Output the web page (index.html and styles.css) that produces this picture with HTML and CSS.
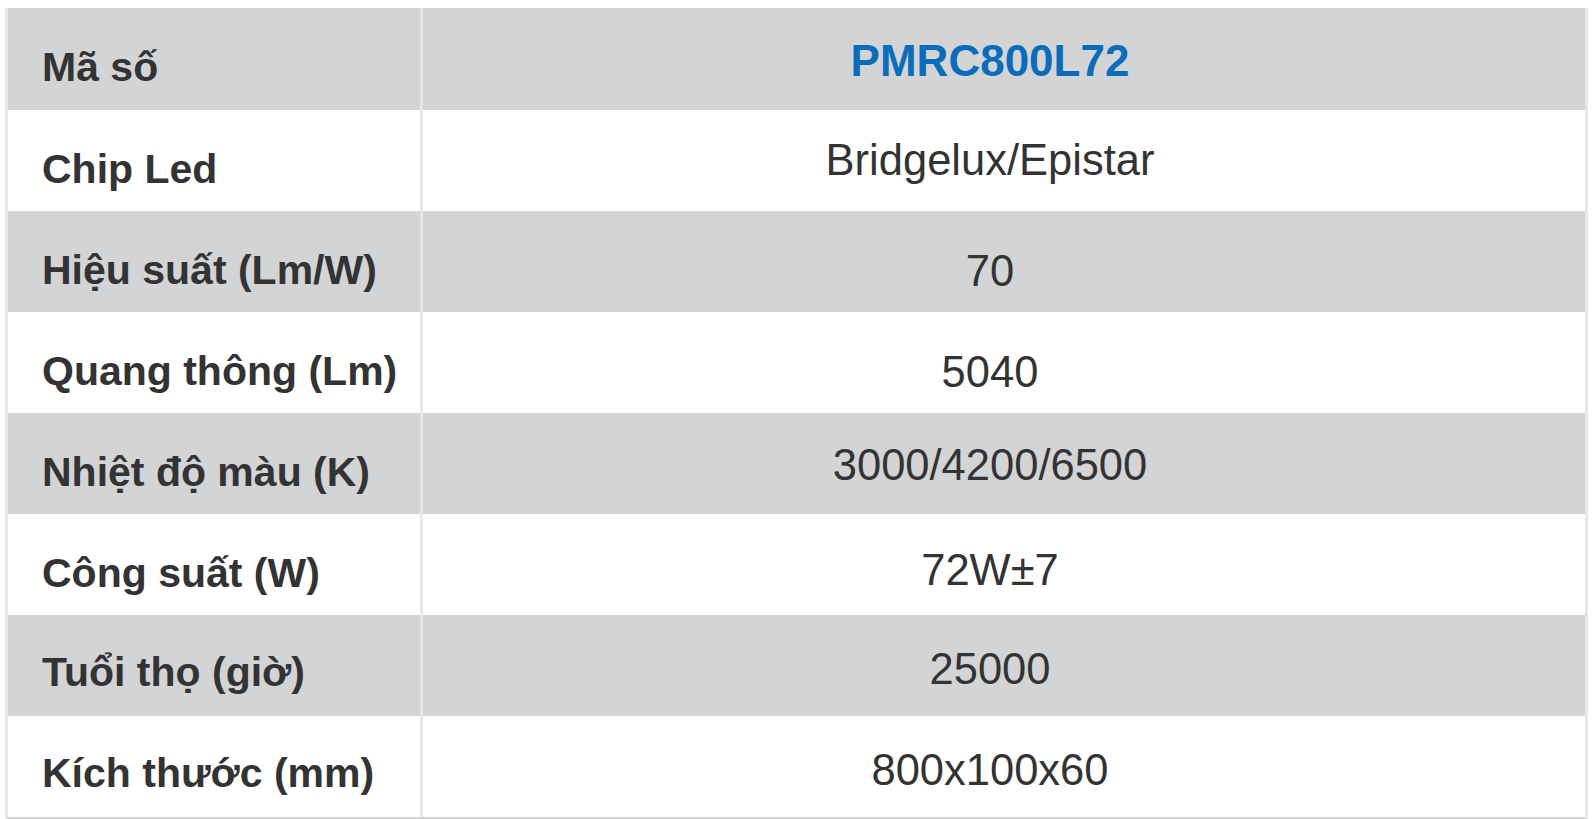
FILE: index.html
```html
<!DOCTYPE html>
<html lang="vi">
<head>
<meta charset="utf-8">
<title>PMRC800L72</title>
<link rel="stylesheet" href="styles.css">
</head>
<body>
<div class="spec">
  <div class="row gray head"><div class="label">Mã số</div><div class="value code">PMRC800L72</div></div>
  <div class="row"><div class="label">Chip Led</div><div class="value up">Bridgelux/Epistar</div></div>
  <div class="row gray"><div class="label">Hiệu suất (Lm/W)</div><div class="value drop">70</div></div>
  <div class="row"><div class="label">Quang thông (Lm)</div><div class="value drop">5040</div></div>
  <div class="row gray"><div class="label">Nhiệt độ màu (K)</div><div class="value">3000/4200/6500</div></div>
  <div class="row"><div class="label">Công suất (W)</div><div class="value mid">72W±7</div></div>
  <div class="row gray"><div class="label late">Tuổi thọ (giờ)</div><div class="value low">25000</div></div>
  <div class="row"><div class="label late">Kích thước (mm)</div><div class="value low">800x100x60</div></div>
</div>
</body>
</html>
```
FILE: styles.css
```css
html, body {
  margin: 0;
  padding: 0;
  background: #ffffff;
}
body {
  font-family: "Liberation Sans", Arial, sans-serif;
  color: #333333;
}
.spec {
  margin: 8px 6px 0 5px;
  border-left: 3px solid #e6e7e8;
  border-right: 3px solid #e6e7e8;
  border-bottom: 3px solid #d3d4d6;
}
.row {
  display: grid;
  grid-template-columns: 415px 1fr;
  height: 101px;
  background: #ffffff;
}
.row.head {
  height: 102px;
}
.row.gray {
  background: #d3d4d6;
}
.label {
  border-right: 3px solid #e6e7e8;
  padding: 17px 0 0 34px;
  font-size: 41px;
  font-weight: bold;
  line-height: 84px;
  white-space: nowrap;
}
.label.late {
  padding-top: 13px;
  line-height: 88px;
}
.value {
  padding: 4px 28px 0 0;
  text-align: center;
  font-size: 43.5px;
  line-height: 97px;
  white-space: nowrap;
}
.value.up {
  padding-top: 0;
  line-height: 101px;
}
.value.low {
  padding-top: 8px;
  line-height: 93px;
}
.value.mid {
  padding-top: 12px;
  line-height: 89px;
}
.value.drop {
  padding-top: 20px;
  line-height: 81px;
}
.value.code {
  color: #0b6cb9;
  font-weight: bold;
  font-size: 44px;
}
```
